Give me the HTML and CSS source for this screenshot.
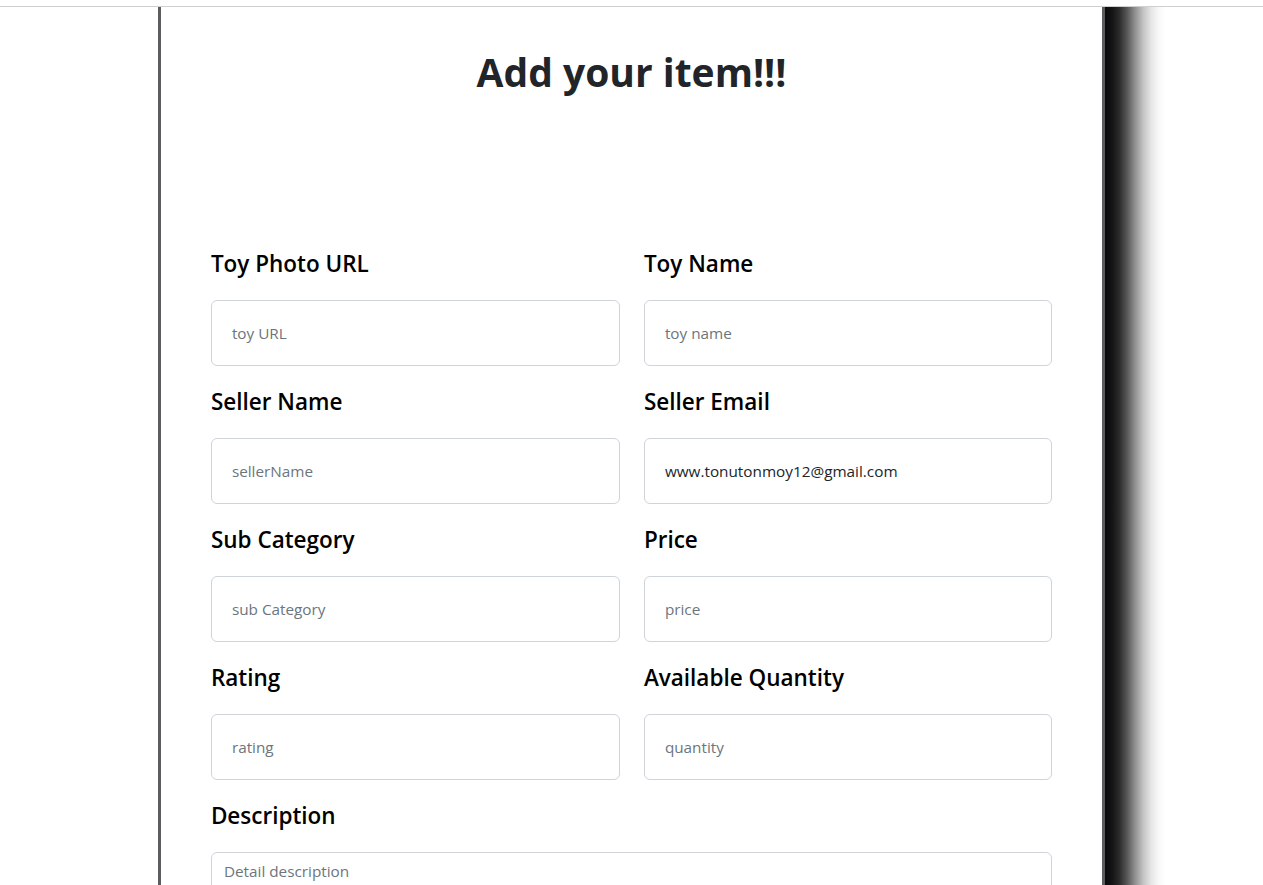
FILE: index.html
```html
<!DOCTYPE html>
<html lang="en">
<head>
<meta charset="utf-8">
<title>Add your item</title>
<link rel="stylesheet" href="styles.css">
</head>
<body>
<div class="topbar"></div>
<div class="stage">
  <main class="panel">
    <h1 class="title">Add your item!!!</h1>
    <form class="item-form">
      <div class="field">
        <label class="label" for="url">Toy Photo URL</label>
        <input class="input" id="url" type="text" placeholder="toy URL">
      </div>
      <div class="field">
        <label class="label" for="name">Toy Name</label>
        <input class="input" id="name" type="text" placeholder="toy name">
      </div>
      <div class="field">
        <label class="label" for="seller">Seller Name</label>
        <input class="input" id="seller" type="text" placeholder="sellerName">
      </div>
      <div class="field">
        <label class="label" for="email">Seller Email</label>
        <input class="input" id="email" type="text" value="www.tonutonmoy12@gmail.com">
      </div>
      <div class="field">
        <label class="label" for="sub">Sub Category</label>
        <input class="input" id="sub" type="text" placeholder="sub Category">
      </div>
      <div class="field">
        <label class="label" for="price">Price</label>
        <input class="input" id="price" type="text" placeholder="price">
      </div>
      <div class="field">
        <label class="label" for="rating">Rating</label>
        <input class="input" id="rating" type="text" placeholder="rating">
      </div>
      <div class="field">
        <label class="label" for="qty">Available Quantity</label>
        <input class="input" id="qty" type="text" placeholder="quantity">
      </div>
      <div class="field field-wide">
        <label class="label" for="desc">Description</label>
        <textarea class="textarea" id="desc" rows="3" placeholder="Detail description"></textarea>
      </div>
    </form>
  </main>
</div>
</body>
</html>
```
FILE: styles.css
```css
html, body {
  margin: 0;
  padding: 0;
  background: #fff;
  height: 885px;
  overflow: hidden;
}
body {
  font-family: "Open Sans", "Noto Sans", sans-serif;
  color: #212529;
}
.topbar {
  height: 6px;
  border-bottom: 1px solid #cfcfcf;
}
.stage {
  height: 878px;
  overflow: hidden;
}
.panel {
  position: relative;
  width: 75%;
  margin: 0 auto;
  box-sizing: border-box;
  min-height: 1000px;
  border-left: 3px solid #5c5c60;
  border-right: 3px solid #5c5c60;
  background: #fff;
  padding: 41px 50px 0 50px;
}
.panel::after {
  content: "";
  position: absolute;
  top: 0;
  bottom: 0;
  left: 100%;
  margin-left: 3px;
  width: 62px;
  background: linear-gradient(to right,
    rgba(0,0,0,0.96) 0px,
    rgba(0,0,0,0.93) 6px,
    rgba(0,0,0,0.84) 14px,
    rgba(0,0,0,0.66) 22px,
    rgba(0,0,0,0.44) 30px,
    rgba(0,0,0,0.24) 38px,
    rgba(0,0,0,0.1) 46px,
    rgba(0,0,0,0.03) 53px,
    rgba(0,0,0,0) 60px);
}
.title {
  margin: 0;
  text-align: center;
  font-size: 39px;
  line-height: 48px;
  font-weight: 700;
  color: #212529;
}
.item-form {
  margin-top: 153px;
  display: grid;
  grid-template-columns: 409px 1fr;
  column-gap: 24px;
}
.field {
  display: flex;
  flex-direction: column;
  margin-bottom: 21px;
}
.field-wide {
  grid-column: 1 / -1;
}
.label {
  font-size: 22.5px;
  line-height: 29px;
  font-weight: 600;
  color: #000;
  margin-bottom: 22px;
}
.input {
  height: 66px;
  box-sizing: border-box;
  border: 1px solid #ced4da;
  border-radius: 6px;
  padding: 0 20px;
  font-family: inherit;
  font-size: 15.3px;
  color: #212529;
  background: #fff;
}
.input::placeholder,
.textarea::placeholder {
  color: #6c757d;
}
.textarea {
  box-sizing: border-box;
  border: 1px solid #ced4da;
  border-radius: 6px;
  padding: 6px 12px;
  font-family: inherit;
  font-size: 15.3px;
  line-height: 24px;
  color: #212529;
  resize: vertical;
  height: 86px;
}
```
